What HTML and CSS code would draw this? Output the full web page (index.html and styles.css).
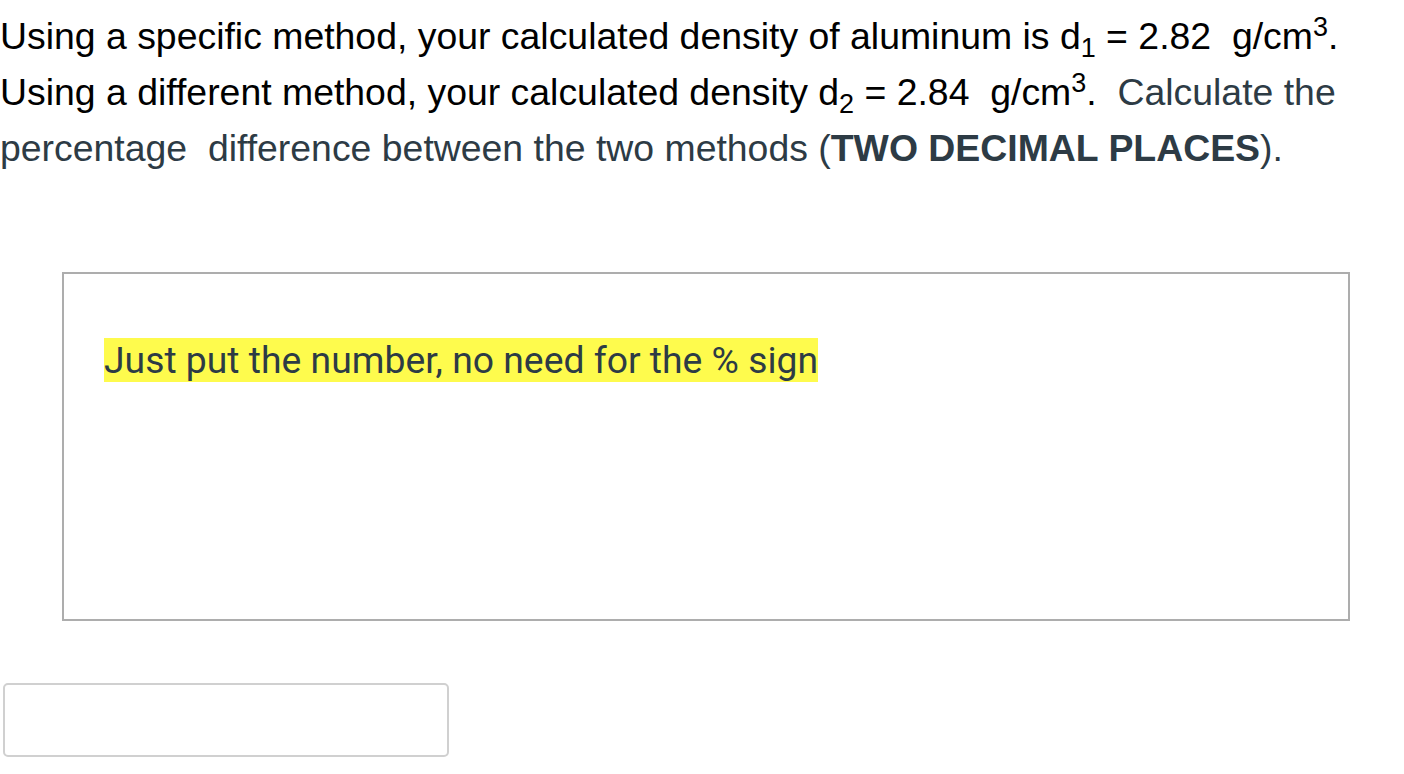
FILE: index.html
```html
<!DOCTYPE html>
<html>
<head>
<meta charset="utf-8">
<link rel="stylesheet" href="styles.css">
</head>
<body>
<div class="page">
  <p class="question"><span class="black">Using a specific method, your calculated density of aluminum is d<sub>1</sub> = 2.82&nbsp; g/cm<sup>3</sup>. Using a different method, your calculated density d<sub>2</sub> = 2.84&nbsp; g/cm<sup>3</sup>.</span>&nbsp; Calculate the percentage&nbsp; difference between the two methods (<strong>TWO DECIMAL PLACES</strong>).</p>
  <div class="note-box">
    <p class="note"><span class="hl">Just put the number, no need for the % sign</span></p>
  </div>
  <input class="answer" type="text">
</div>
</body>
</html>
```
FILE: styles.css
```css
html, body {
  margin: 0;
  padding: 0;
  background: #ffffff;
}
.page {
  padding: 8px 0 0 0;
  width: 1404px;
}
.question {
  margin: 0;
  width: 1380px;
  font-family: "Liberation Sans", Arial, sans-serif;
  font-size: 37.4px;
  line-height: 56px;
  color: #2d3b45;
}
.question .black {
  color: #000000;
}
.question strong {
  font-weight: bold;
}
.question sub, .question sup {
  font-size: 27px;
  line-height: 0;
}
.note-box {
  margin: 96px 0 0 62px;
  width: 1288px;
  height: 349px;
  border: 2px solid #adadad;
  box-sizing: border-box;
  overflow: hidden;
}
.note {
  margin: 64px 0 0 40px;
  font-family: Roboto, sans-serif;
  font-size: 37.3px;
  line-height: 44px;
  color: #2d3b45;
}
.hl {
  background: #fefb4d;
}
.answer {
  display: block;
  margin: 62px 0 0 3px;
  width: 446px;
  height: 74px;
  box-sizing: border-box;
  border: 2px solid #d0d0d0;
  border-radius: 5px;
  background: #ffffff;
  outline: none;
}
```
